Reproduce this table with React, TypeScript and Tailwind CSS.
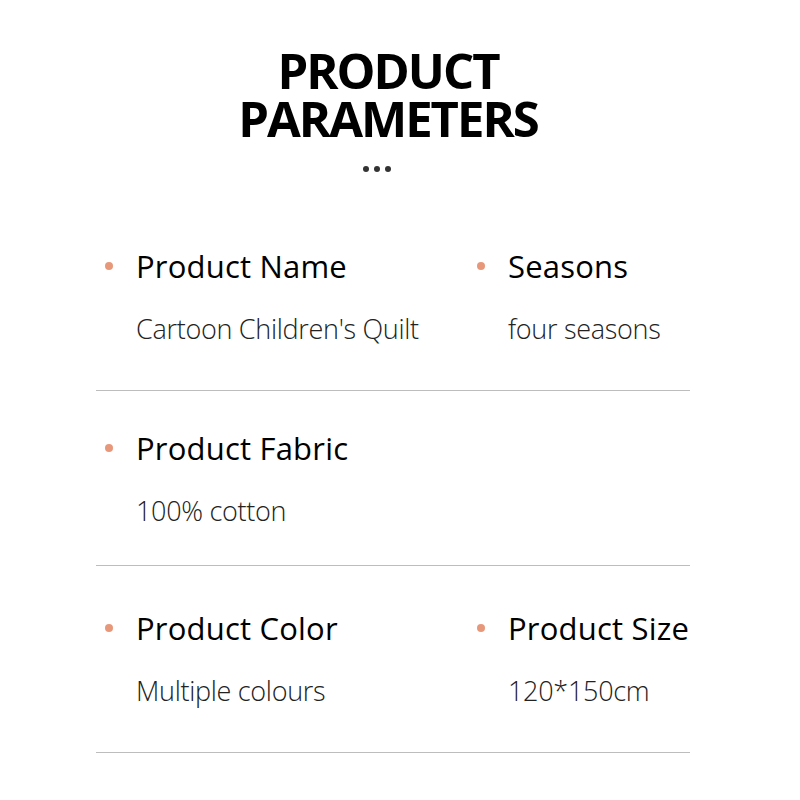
import React from "react";

const Item = ({ label, value }: { label: string; value: string }) => (
  <div className="flex flex-col">
    <div className="flex items-center h-[34px]">
      <span className="ml-[9px] w-[8px] h-[8px] rounded-full bg-[#e8987a]" />
      <span className="ml-[23px] text-[31px] leading-none text-black font-normal whitespace-nowrap tracking-[0.2px]">{label}</span>
    </div>
    <div className="mt-[28px] ml-[40px] h-[34px] flex items-center text-[27px] leading-none font-light text-[#222] tracking-[-0.3px] whitespace-nowrap">
      {value}
    </div>
  </div>
);

export default function App() {
  return (
    <div className="w-[800px] h-[800px] bg-white overflow-hidden" style={{ fontFamily: '"Open Sans", "Noto Sans", sans-serif' }}>
      <div className="flex flex-col items-center pt-[46px]">
        <div className="mr-[24px] text-[49px] leading-[48px] font-bold text-black text-center tracking-[-2px]">
          <div>PRODUCT</div>
          <div>PARAMETERS</div>
        </div>
        <div className="flex gap-[5px] mt-[24px] mr-[46px]">
          <span className="w-[6px] h-[6px] rounded-full bg-[#333]" />
          <span className="w-[6px] h-[6px] rounded-full bg-[#333]" />
          <span className="w-[6px] h-[6px] rounded-full bg-[#333]" />
        </div>
      </div>
      <div className="ml-[96px] w-[594px] mt-[77px]">
        <div className="grid grid-cols-[372px_1fr] pb-[45px] border-b border-[#bdbdbd]">
          <Item label="Product Name" value="Cartoon Children's Quilt" />
          <Item label="Seasons" value="four seasons" />
        </div>
        <div className="grid grid-cols-[372px_1fr] pt-[40px] pb-[38px] border-b border-[#bdbdbd]">
          <Item label="Product Fabric" value="100% cotton" />
        </div>
        <div className="grid grid-cols-[372px_1fr] pt-[45px] pb-[45px] border-b border-[#bdbdbd]">
          <Item label="Product Color" value="Multiple colours" />
          <Item label="Product Size" value="120*150cm" />
        </div>
      </div>
    </div>
  );
}
